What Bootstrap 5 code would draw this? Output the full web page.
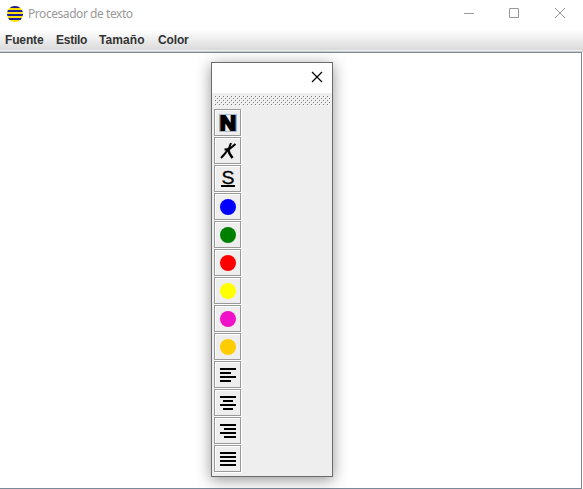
<!DOCTYPE html>
<html lang="es">
<head>
<meta charset="utf-8">
<title>Procesador de texto</title>
<link rel="stylesheet" href="https://cdn.jsdelivr.net/npm/bootstrap@5.3.0/dist/css/bootstrap.min.css">
<style>
body{font-family:"Liberation Sans",Arial,sans-serif;background:#fff}
svg{display:block}
.app-window{height:489px;width:583px}
.title-strip{height:30px;padding-left:7px;padding-bottom:3px;font:12px "Noto Sans",sans-serif;color:#999}
.app-title{margin-left:5px;letter-spacing:-.44px;line-height:16px;padding-top:1px}
.win-btn{width:46px;height:27px;color:#999}
.win-btn:last-child{margin-left:-1px}
.menu-strip{height:22px;padding-left:5px;background:linear-gradient(#fff,#dadada 20px,#eee 20px,#eee 21px,#ccc 21px);font-size:12px;font-weight:700;color:#333}
.menu-strip a{color:#333;text-decoration:none;line-height:20px;letter-spacing:-.15px;width:51px}
.menu-strip a:nth-child(2){width:43px;letter-spacing:-.25px}
.menu-strip a:nth-child(3){width:59px;letter-spacing:.1px}
.editor{margin-right:1px;border:1px solid #7a8a99;border-left:0;background:#fff}
.tool-window{position:absolute;left:211px;top:62px;width:122px;height:415px;border:1px solid #6b6b6b;background:#eee;box-shadow:0 3px 14px rgba(0,0,0,.42)}
.tool-title{height:30px;background:#fff;padding-right:9px;padding-top:0}
.tool-grip{height:10px;margin:3px 1px 3px 2px}
.tool-list{padding-left:2px;gap:1px}
.tool-btn{width:27px;height:27px;padding:0;border:1px solid #999;border-radius:0;background:#eee;box-shadow:inset 1px 1px #fff,1px 1px #fff}
.tool-btn svg{width:25px;height:25px}
</style>
<script src="https://cdn.jsdelivr.net/npm/bootstrap@5.3.0/dist/js/bootstrap.bundle.min.js"></script>
</head>
<body class="overflow-hidden">
<div class="app-window d-flex flex-column position-relative overflow-hidden">
<header class="title-strip d-flex align-items-center">
<svg width="16" height="16" viewBox="0 0 16 16"><defs><clipPath id="disc"><circle cx="8" cy="8" r="8"/></clipPath></defs><g clip-path="url(#disc)"><path fill="#ffe000" d="M0 0h16v16H0z"/><path fill="#1c1c9c" d="M0 0h16v2H0zM0 4h16v2H0zM0 8h16v2H0zM0 12h16v2H0z"/></g></svg>
<span class="app-title">Procesador de texto</span>
<div class="win-btns d-flex ms-auto">
<span class="win-btn"><svg width="46" height="27" fill="none" stroke="currentColor"><path d="M18 13.5h10"/></svg></span>
<span class="win-btn"><svg width="46" height="27" fill="none" stroke="currentColor"><path d="M17.500 8.500h9v9h-9z"/></svg></span>
<span class="win-btn"><svg width="46" height="27" fill="none" stroke="currentColor"><path d="M18 8l10 10M28 8L18 18"/></svg></span>
</div>
</header>
<nav class="menu-strip d-flex"><a href="#">Fuente</a><a href="#">Estilo</a><a href="#">Tamaño</a><a href="#">Color</a></nav>
<main class="editor flex-grow-1"></main>
<section class="tool-window">
<div class="tool-title d-flex justify-content-end"><svg width="12" height="30" fill="none" stroke="#000" stroke-width="1.2"><path d="M1 9l10 10M11 9L1 19"/></svg></div>
<svg class="tool-grip" width="117" height="10" shape-rendering="crispEdges"><defs><pattern id="grip" width="4" height="4" y="-1" patternUnits="userSpaceOnUse"><path fill="#fff" d="M0 0h1v1H0zM2 2h1v1H2z"/><path fill="#7a7a7a" d="M1 1h1v1H1zM3 3h1v1H3z"/></pattern></defs><rect width="117" height="10" fill="url(#grip)"/></svg>
<div class="tool-list d-flex flex-column">
<button class="btn tool-btn"><svg><path fill="#eee" stroke="#a3b8cc" d="M4.500 4.500h17v17h-17z"/><text x="4.800" y="20" font-family="Liberation Sans" font-weight="700" font-size="20" textLength="16.400" lengthAdjust="spacingAndGlyphs" stroke="#000" stroke-width="1.800">N</text></svg></button>
<button class="btn tool-btn"><svg><path fill="none" stroke="#000" stroke-width="2" d="M16 5l-2 5-4 5.500-4 4.500M9.500 11.500l5-.5L20.500 6"/><path fill="none" stroke="#000" stroke-width="2.500" d="M13 10.500l1.500 5L17.500 20"/></svg></button>
<button class="btn tool-btn"><svg><text x="6.500" y="17.500" font-family="Liberation Sans" font-size="17.500" textLength="13" lengthAdjust="spacingAndGlyphs" stroke="#000" stroke-width=".3">S</text><path d="M6 19h14v2H6z"/></svg></button>
<button class="btn tool-btn"><svg><circle cx="13" cy="13" r="8" fill="#00f"/></svg></button>
<button class="btn tool-btn"><svg><circle cx="13" cy="13" r="8" fill="#008000"/></svg></button>
<button class="btn tool-btn"><svg><circle cx="13" cy="13" r="8" fill="#f00"/></svg></button>
<button class="btn tool-btn"><svg><circle cx="13" cy="13" r="8" fill="#ff0"/></svg></button>
<button class="btn tool-btn"><svg><circle cx="13" cy="13" r="8" fill="#f012c8"/></svg></button>
<button class="btn tool-btn"><svg><circle cx="13" cy="13" r="8" fill="#fc0"/></svg></button>
<button class="btn tool-btn"><svg><path d="M5 6h16v2H5zM5 10h11v2H5zM5 14h16v2H5zM5 18h11v2H5z"/></svg></button>
<button class="btn tool-btn"><svg><path d="M5 6h16v2H5zM8 10h10v2H8zM5 14h16v2H5zM8 18h10v2H8z"/></svg></button>
<button class="btn tool-btn"><svg><path d="M5 6h16v2H5zM9 10h12v2H9zM5 14h16v2H5zM9 18h12v2H9z"/></svg></button>
<button class="btn tool-btn"><svg><path d="M5 6h16v2H5zM5 10h16v2H5zM5 14h16v2H5zM5 18h16v2H5z"/></svg></button>
</div>
</section>
</div>
</body>
</html>
